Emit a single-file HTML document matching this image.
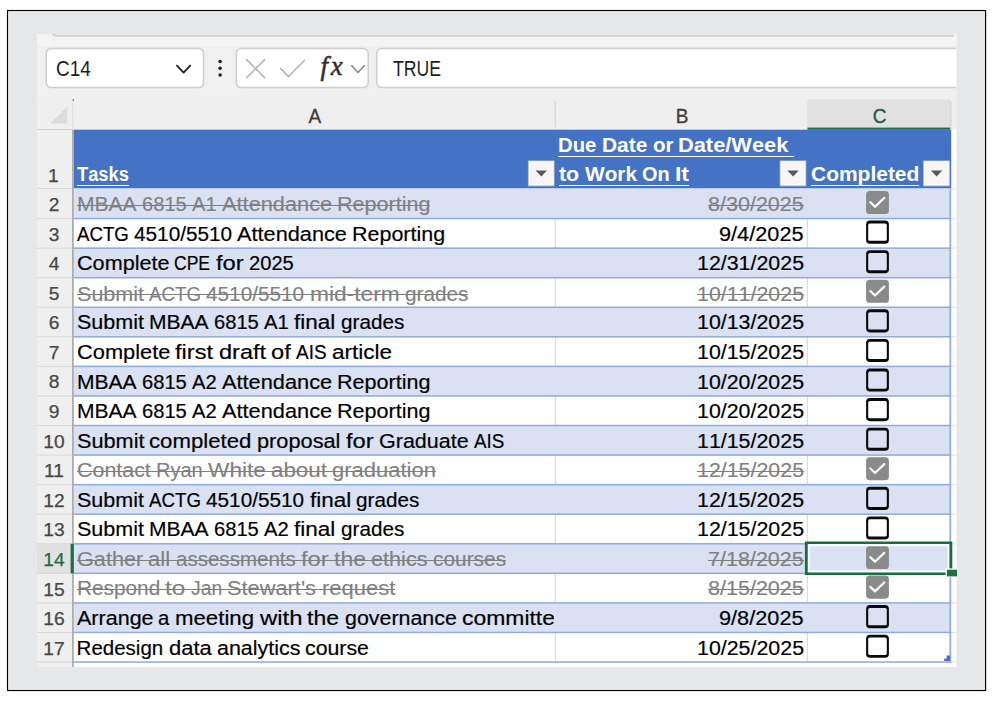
<!DOCTYPE html>
<html lang="en">
<head>
<meta charset="utf-8">
<title>Task list</title>
<style>
html,body{margin:0;padding:0;background:#fff;}
body{width:997px;height:715px;position:relative;overflow:hidden;font-family:"Liberation Sans",Arial,sans-serif;}
.abs{position:absolute;}
svg.bg{position:absolute;left:0;top:0;display:block;}
.clip{left:0;top:0;width:997px;height:715px;clip-path:inset(34px 40px 48px 37px);}
.ln{position:absolute;white-space:pre;line-height:1;height:1em;font-kerning:none;font-variant-ligatures:none;}
.w{display:inline-block;transform-origin:0 50%;white-space:pre;word-spacing:0;}
.cell{font-size:20.5px;color:#000;-webkit-text-stroke:0.18px currentColor;}
.done{color:#808080;-webkit-text-stroke:0.1px currentColor;background:linear-gradient(#7f7f7f,#7f7f7f) 0 10.6px/100% 1.4px no-repeat;}
.hd{font-size:20.3px;font-weight:bold;color:#fff;background:linear-gradient(#fff,#fff) 0 21.2px/100% 1.4px no-repeat;height:23px;}
.rn{position:absolute;font-size:19.2px;color:#474747;line-height:1;text-align:center;width:36px;left:36px;white-space:nowrap;transform:scaleX(1.0);-webkit-text-stroke:0.25px currentColor;}
.cl{position:absolute;font-size:20.2px;transform:scaleX(0.94);-webkit-text-stroke:0.3px currentColor;color:#3c3c3c;line-height:1;text-align:center;white-space:nowrap;}
.ui{position:absolute;font-size:22.6px;color:#1e1e1e;line-height:1;white-space:nowrap;transform-origin:0 50%;}
.fx{position:absolute;font-family:"Liberation Serif","DejaVu Serif",serif;font-style:italic;font-weight:normal;font-size:26.8px;line-height:1;color:#2e2e2e;white-space:nowrap;letter-spacing:2.8px;-webkit-text-stroke:0.5px currentColor;}
</style>
</head>
<body>
<svg class="bg" width="997" height="715" viewBox="0 0 997 715" >
<defs><clipPath id="shot"><rect x="37" y="34" width="920" height="633"/></clipPath></defs>
<rect x="7.60" y="10.60" width="977.90" height="679.85" fill="#e6e7e8" stroke="#000" stroke-width="1.3"/>
<rect x="8.75" y="11.75" width="975.60" height="677.55" fill="none" stroke="#f0f1f3" stroke-width="0.9"/>
<g clip-path="url(#shot)">
<rect x="37.00" y="34.00" width="920.00" height="633.00" fill="#f0f0f0"/>
<rect x="37.00" y="34.00" width="920.00" height="14.00" fill="#f4f4f4"/>
<path d="M52.5 34 Q54 35.8 57.5 35.8 L954 35.8" fill="none" stroke="#d2d2d2" stroke-width="2"/>
<rect x="37.00" y="46.60" width="920.00" height="1.20" fill="#ececec"/>
<rect x="46.3" y="48.4" width="157.2" height="39.2" rx="5" fill="#fff" stroke="#cfcfcf" stroke-width="1.5"/>
<path d="M177 65.6 L183.6 72.6 L190.2 65.6" fill="none" stroke="#262626" stroke-width="1.9" stroke-linecap="round" stroke-linejoin="round"/>
<circle cx="220.1" cy="61.5" r="1.75" fill="#1c1c1c"/>
<circle cx="220.1" cy="68.3" r="1.75" fill="#1c1c1c"/>
<circle cx="220.1" cy="75.1" r="1.75" fill="#1c1c1c"/>
<rect x="236.4" y="48.4" width="131.8" height="39.2" rx="5" fill="#fff" stroke="#cfcfcf" stroke-width="1.5"/>
<path d="M246.6 59.6 L264.6 77.6 M264.6 59.6 L246.6 77.6" fill="none" stroke="#b2b2b2" stroke-width="1.5" stroke-linecap="round"/>
<path d="M280.6 68.6 L288.6 76.6 L304.6 60.2" fill="none" stroke="#b2b2b2" stroke-width="1.5" stroke-linecap="round" stroke-linejoin="round"/>
<path d="M351.6 65.6 L358 72.4 L364.4 65.6" fill="none" stroke="#868686" stroke-width="1.5" stroke-linecap="round" stroke-linejoin="round"/>
<rect x="376.8" y="48.4" width="620" height="39.2" rx="5" fill="#fff" stroke="#cfcfcf" stroke-width="1.5"/>
<rect x="37.00" y="98.00" width="920.00" height="31.90" fill="#efefef"/>
<path d="M67.4 106.4 L67.4 123.4 L50.4 123.4 Z" fill="#dcdcdc"/>
<rect x="807.30" y="99.50" width="143.30" height="30.40" fill="#e1e1e1"/>
<rect x="807.30" y="127.60" width="143.30" height="2.30" fill="#1f7145"/>
<rect x="554.70" y="101.50" width="1.10" height="28.40" fill="#d0d0d0"/>
<rect x="950.30" y="101.50" width="1.10" height="28.40" fill="#d0d0d0"/>
<rect x="72.10" y="101.50" width="1.10" height="27.40" fill="#e0e0e0"/>
<circle cx="73.3" cy="99.9" r="0.9" fill="#7a7a7a"/>
<rect x="37.00" y="128.90" width="770.30" height="1.00" fill="#c9c9c9"/>
<rect x="37.00" y="127.60" width="770.30" height="0.90" fill="#f6f6f6"/>
<rect x="37.00" y="129.90" width="36.50" height="537.10" fill="#efefef"/>
<rect x="73.50" y="129.90" width="883.50" height="537.10" fill="#fff"/>
<rect x="73.50" y="129.90" width="877.70" height="58.60" fill="#4472c4"/>
<rect x="37.00" y="543.78" width="36.50" height="29.57" fill="#e1e1e1"/>
<rect x="73.50" y="188.50" width="877.10" height="30.06" fill="#d9e1f2"/>
<rect x="554.80" y="218.56" width="1.10" height="29.57" fill="#d9d9d9"/>
<rect x="806.80" y="218.56" width="1.10" height="29.57" fill="#d9d9d9"/>
<rect x="73.50" y="248.13" width="877.10" height="29.57" fill="#d9e1f2"/>
<rect x="554.80" y="277.69" width="1.10" height="29.57" fill="#d9d9d9"/>
<rect x="806.80" y="277.69" width="1.10" height="29.57" fill="#d9d9d9"/>
<rect x="73.50" y="307.26" width="877.10" height="29.57" fill="#d9e1f2"/>
<rect x="554.80" y="336.83" width="1.10" height="29.57" fill="#d9d9d9"/>
<rect x="806.80" y="336.83" width="1.10" height="29.57" fill="#d9d9d9"/>
<rect x="73.50" y="366.39" width="877.10" height="29.57" fill="#d9e1f2"/>
<rect x="554.80" y="395.96" width="1.10" height="29.57" fill="#d9d9d9"/>
<rect x="806.80" y="395.96" width="1.10" height="29.57" fill="#d9d9d9"/>
<rect x="73.50" y="425.52" width="877.10" height="29.57" fill="#d9e1f2"/>
<rect x="554.80" y="455.09" width="1.10" height="29.57" fill="#d9d9d9"/>
<rect x="806.80" y="455.09" width="1.10" height="29.57" fill="#d9d9d9"/>
<rect x="73.50" y="484.65" width="877.10" height="29.57" fill="#d9e1f2"/>
<rect x="554.80" y="514.22" width="1.10" height="29.57" fill="#d9d9d9"/>
<rect x="806.80" y="514.22" width="1.10" height="29.57" fill="#d9d9d9"/>
<rect x="73.50" y="543.78" width="877.10" height="29.57" fill="#d9e1f2"/>
<rect x="554.80" y="573.35" width="1.10" height="29.57" fill="#d9d9d9"/>
<rect x="806.80" y="573.35" width="1.10" height="29.57" fill="#d9d9d9"/>
<rect x="73.50" y="602.91" width="877.10" height="29.57" fill="#d9e1f2"/>
<rect x="554.80" y="632.48" width="1.10" height="29.57" fill="#d9d9d9"/>
<rect x="806.80" y="632.48" width="1.10" height="29.57" fill="#d9d9d9"/>
<rect x="37.00" y="188.00" width="34.90" height="1.00" fill="#d9d9d9"/>
<rect x="951.40" y="188.00" width="5.60" height="1.00" fill="#e2e2e2"/>
<rect x="37.00" y="218.06" width="34.90" height="1.00" fill="#d9d9d9"/>
<rect x="951.40" y="218.06" width="5.60" height="1.00" fill="#e2e2e2"/>
<rect x="73.50" y="217.81" width="877.70" height="1.50" fill="#8faadc"/>
<rect x="37.00" y="247.63" width="34.90" height="1.00" fill="#d9d9d9"/>
<rect x="951.40" y="247.63" width="5.60" height="1.00" fill="#e2e2e2"/>
<rect x="73.50" y="247.38" width="877.70" height="1.50" fill="#8faadc"/>
<rect x="37.00" y="277.19" width="34.90" height="1.00" fill="#d9d9d9"/>
<rect x="951.40" y="277.19" width="5.60" height="1.00" fill="#e2e2e2"/>
<rect x="73.50" y="276.94" width="877.70" height="1.50" fill="#8faadc"/>
<rect x="37.00" y="306.76" width="34.90" height="1.00" fill="#d9d9d9"/>
<rect x="951.40" y="306.76" width="5.60" height="1.00" fill="#e2e2e2"/>
<rect x="73.50" y="306.51" width="877.70" height="1.50" fill="#8faadc"/>
<rect x="37.00" y="336.33" width="34.90" height="1.00" fill="#d9d9d9"/>
<rect x="951.40" y="336.33" width="5.60" height="1.00" fill="#e2e2e2"/>
<rect x="73.50" y="336.08" width="877.70" height="1.50" fill="#8faadc"/>
<rect x="37.00" y="365.89" width="34.90" height="1.00" fill="#d9d9d9"/>
<rect x="951.40" y="365.89" width="5.60" height="1.00" fill="#e2e2e2"/>
<rect x="73.50" y="365.64" width="877.70" height="1.50" fill="#8faadc"/>
<rect x="37.00" y="395.46" width="34.90" height="1.00" fill="#d9d9d9"/>
<rect x="951.40" y="395.46" width="5.60" height="1.00" fill="#e2e2e2"/>
<rect x="73.50" y="395.21" width="877.70" height="1.50" fill="#8faadc"/>
<rect x="37.00" y="425.02" width="34.90" height="1.00" fill="#d9d9d9"/>
<rect x="951.40" y="425.02" width="5.60" height="1.00" fill="#e2e2e2"/>
<rect x="73.50" y="424.77" width="877.70" height="1.50" fill="#8faadc"/>
<rect x="37.00" y="454.59" width="34.90" height="1.00" fill="#d9d9d9"/>
<rect x="951.40" y="454.59" width="5.60" height="1.00" fill="#e2e2e2"/>
<rect x="73.50" y="454.34" width="877.70" height="1.50" fill="#8faadc"/>
<rect x="37.00" y="484.15" width="34.90" height="1.00" fill="#d9d9d9"/>
<rect x="951.40" y="484.15" width="5.60" height="1.00" fill="#e2e2e2"/>
<rect x="73.50" y="483.90" width="877.70" height="1.50" fill="#8faadc"/>
<rect x="37.00" y="513.72" width="34.90" height="1.00" fill="#d9d9d9"/>
<rect x="951.40" y="513.72" width="5.60" height="1.00" fill="#e2e2e2"/>
<rect x="73.50" y="513.47" width="877.70" height="1.50" fill="#8faadc"/>
<rect x="37.00" y="543.28" width="34.90" height="1.00" fill="#d9d9d9"/>
<rect x="951.40" y="543.28" width="5.60" height="1.00" fill="#e2e2e2"/>
<rect x="73.50" y="543.03" width="877.70" height="1.50" fill="#8faadc"/>
<rect x="37.00" y="572.85" width="34.90" height="1.00" fill="#d9d9d9"/>
<rect x="951.40" y="572.85" width="5.60" height="1.00" fill="#e2e2e2"/>
<rect x="73.50" y="572.60" width="877.70" height="1.50" fill="#8faadc"/>
<rect x="37.00" y="602.41" width="34.90" height="1.00" fill="#d9d9d9"/>
<rect x="951.40" y="602.41" width="5.60" height="1.00" fill="#e2e2e2"/>
<rect x="73.50" y="602.16" width="877.70" height="1.50" fill="#8faadc"/>
<rect x="37.00" y="631.98" width="34.90" height="1.00" fill="#d9d9d9"/>
<rect x="951.40" y="631.98" width="5.60" height="1.00" fill="#e2e2e2"/>
<rect x="73.50" y="631.73" width="877.70" height="1.50" fill="#8faadc"/>
<rect x="37.00" y="661.54" width="34.90" height="1.00" fill="#d9d9d9"/>
<rect x="951.40" y="661.54" width="5.60" height="1.00" fill="#e2e2e2"/>
<rect x="73.50" y="661.29" width="877.70" height="1.50" fill="#8faadc"/>
<rect x="949.50" y="188.50" width="1.70" height="473.54" fill="#8faadc"/>
<rect x="72.00" y="129.90" width="1.80" height="537.10" fill="#adadad"/>
<rect x="70.60" y="543.78" width="3.20" height="29.57" fill="#1f7145"/>
<rect x="956.20" y="34.00" width="0.80" height="633.00" fill="#f1f1f1"/>
<rect x="528.4" y="161" width="25.6" height="24.8" fill="#f6f6f6" stroke="#c6c6c6" stroke-width="1"/>
<rect x="529.5" y="162.1" width="23.4" height="22.6" fill="none" stroke="#fff" stroke-width="1"/>
<path d="M535.6 170.6 L547.0 170.6 L541.3 176.4 Z" fill="#595959"/>
<rect x="780.2" y="161" width="25.6" height="24.8" fill="#f6f6f6" stroke="#c6c6c6" stroke-width="1"/>
<rect x="781.3" y="162.1" width="23.4" height="22.6" fill="none" stroke="#fff" stroke-width="1"/>
<path d="M787.4 170.6 L798.8 170.6 L793.1 176.4 Z" fill="#595959"/>
<rect x="923.7" y="161" width="25.6" height="24.8" fill="#f6f6f6" stroke="#c6c6c6" stroke-width="1"/>
<rect x="924.8" y="162.1" width="23.4" height="22.6" fill="none" stroke="#fff" stroke-width="1"/>
<path d="M930.9 170.6 L942.3 170.6 L936.6 176.4 Z" fill="#595959"/>
<rect x="866.10" y="191.00" width="22.80" height="23.10" rx="3.6" fill="#8a8a8a"/>
<path d="M870.40 202.30 L875.00 206.80 L884.30 197.90" fill="none" stroke="#fff" stroke-width="2.2" stroke-linecap="round" stroke-linejoin="round"/>
<rect x="866.10" y="220.58" width="22.80" height="23.10" rx="3.8" fill="#0a0a0a"/>
<rect x="868.20" y="223.48" width="18.60" height="17.30" rx="1.6" fill="#fff"/>
<rect x="866.10" y="250.16" width="22.80" height="23.10" rx="3.8" fill="#0a0a0a"/>
<rect x="868.20" y="253.06" width="18.60" height="17.30" rx="1.6" fill="#d9e1f2"/>
<rect x="866.10" y="279.74" width="22.80" height="23.10" rx="3.6" fill="#8a8a8a"/>
<path d="M870.40 291.04 L875.00 295.54 L884.30 286.64" fill="none" stroke="#fff" stroke-width="2.2" stroke-linecap="round" stroke-linejoin="round"/>
<rect x="866.10" y="309.32" width="22.80" height="23.10" rx="3.8" fill="#0a0a0a"/>
<rect x="868.20" y="312.22" width="18.60" height="17.30" rx="1.6" fill="#d9e1f2"/>
<rect x="866.10" y="338.90" width="22.80" height="23.10" rx="3.8" fill="#0a0a0a"/>
<rect x="868.20" y="341.80" width="18.60" height="17.30" rx="1.6" fill="#fff"/>
<rect x="866.10" y="368.48" width="22.80" height="23.10" rx="3.8" fill="#0a0a0a"/>
<rect x="868.20" y="371.38" width="18.60" height="17.30" rx="1.6" fill="#d9e1f2"/>
<rect x="866.10" y="398.06" width="22.80" height="23.10" rx="3.8" fill="#0a0a0a"/>
<rect x="868.20" y="400.96" width="18.60" height="17.30" rx="1.6" fill="#fff"/>
<rect x="866.10" y="427.64" width="22.80" height="23.10" rx="3.8" fill="#0a0a0a"/>
<rect x="868.20" y="430.54" width="18.60" height="17.30" rx="1.6" fill="#d9e1f2"/>
<rect x="866.10" y="457.22" width="22.80" height="23.10" rx="3.6" fill="#8a8a8a"/>
<path d="M870.40 468.52 L875.00 473.02 L884.30 464.12" fill="none" stroke="#fff" stroke-width="2.2" stroke-linecap="round" stroke-linejoin="round"/>
<rect x="866.10" y="486.80" width="22.80" height="23.10" rx="3.8" fill="#0a0a0a"/>
<rect x="868.20" y="489.70" width="18.60" height="17.30" rx="1.6" fill="#d9e1f2"/>
<rect x="866.10" y="516.38" width="22.80" height="23.10" rx="3.8" fill="#0a0a0a"/>
<rect x="868.20" y="519.28" width="18.60" height="17.30" rx="1.6" fill="#fff"/>
<rect x="866.10" y="545.96" width="22.80" height="23.10" rx="3.6" fill="#8a8a8a"/>
<path d="M870.40 557.26 L875.00 561.76 L884.30 552.86" fill="none" stroke="#fff" stroke-width="2.2" stroke-linecap="round" stroke-linejoin="round"/>
<rect x="866.10" y="575.54" width="22.80" height="23.10" rx="3.6" fill="#8a8a8a"/>
<path d="M870.40 586.84 L875.00 591.34 L884.30 582.44" fill="none" stroke="#fff" stroke-width="2.2" stroke-linecap="round" stroke-linejoin="round"/>
<rect x="866.10" y="605.12" width="22.80" height="23.10" rx="3.8" fill="#0a0a0a"/>
<rect x="868.20" y="608.02" width="18.60" height="17.30" rx="1.6" fill="#d9e1f2"/>
<rect x="866.10" y="634.70" width="22.80" height="23.10" rx="3.8" fill="#0a0a0a"/>
<rect x="868.20" y="637.60" width="18.60" height="17.30" rx="1.6" fill="#fff"/>
<path fill-rule="evenodd" fill="#fff" d="M807.60 544.00 H949.60 V572.80 H807.60 Z M809.60 546.20 H947.60 V570.60 H809.60 Z"/>
<path fill-rule="evenodd" fill="#176d3e" d="M804.90 541.60 H952.30 V575.10 H804.90 Z M807.70 544.10 H949.50 V572.60 H807.70 Z"/>
<rect x="945.60" y="568.40" width="11.40" height="8.90" fill="#fff"/>
<rect x="946.90" y="569.70" width="10.10" height="6.70" fill="#1f7145"/>
<path d="M944.2 661 L944.2 658.6 L946.6 658.6 L946.6 655.6 L950 655.6 L950 661 Z" fill="#4a6ec2"/>
</g>
</svg>
<div class="abs clip">
<div class="ui" style="left:55.8px;top:58px;transform:scaleX(0.8400);">C14</div>
<div class="fx" style="left:320.4px;top:53.2px;">fx</div>
<div class="ui" style="left:392.6px;top:58px;transform:scaleX(0.7800);">TRUE</div>
<div class="cl" style="left:74.3px;width:481.8px;top:105.9px;color:#3c3c3c;">A</div>
<div class="cl" style="left:556.1px;width:252.0px;top:105.9px;color:#3c3c3c;">B</div>
<div class="cl" style="left:808.1px;width:143.3px;top:105.9px;color:#1d5a3c;">C</div>
<div class="rn" style="top:165.5px;margin-left:-0.6px;">1</div>
<div class="rn" style="top:195.00px;color:#474747;">2</div>
<div class="ln cell done" style="left:76.60px;top:193.95px;width:353.90px;word-spacing:-0.42px;"><span class="w" style="transform:scaleX(1.0269);margin-right:1.57px">MBAA</span> <span class="w" style="transform:scaleX(0.9825);margin-right:-0.80px">6815</span> <span class="w" style="transform:scaleX(0.9853);margin-right:-0.37px">A1</span> <span class="w" style="transform:scaleX(1.0625);margin-right:6.49px">Attendance</span> <span class="w" style="transform:scaleX(1.0510);margin-right:4.53px">Reporting</span></div>
<div class="ln cell done" style="left:707.82px;top:193.95px;width:95.79px;"><span class="w" style="transform:scaleX(1.0503)">8/30/2025</span></div>
<div class="rn" style="top:224.58px;color:#474747;">3</div>
<div class="ln cell" style="left:76.60px;top:223.53px;width:368.90px;word-spacing:-0.43px;"><span class="w" style="transform:scaleX(0.9115);margin-right:-5.04px">ACTG</span> <span class="w" style="transform:scaleX(1.0128);margin-right:1.24px">4510/5510</span> <span class="w" style="transform:scaleX(1.0596);margin-right:6.18px">Attendance</span> <span class="w" style="transform:scaleX(1.0481);margin-right:4.28px">Reporting</span></div>
<div class="ln cell" style="left:719.06px;top:223.53px;width:84.55px;"><span class="w" style="transform:scaleX(1.0596)">9/4/2025</span></div>
<div class="rn" style="top:254.16px;color:#474747;">4</div>
<div class="ln cell" style="left:76.60px;top:253.11px;width:216.96px;word-spacing:-0.39px;"><span class="w" style="transform:scaleX(1.0542);margin-right:4.75px">Complete</span> <span class="w" style="transform:scaleX(0.8556);margin-right:-6.09px">CPE</span> <span class="w" style="transform:scaleX(1.1577);margin-right:3.77px">for</span> <span class="w" style="transform:scaleX(0.9825);margin-right:-0.80px">2025</span></div>
<div class="ln cell" style="left:696.58px;top:253.11px;width:107.03px;"><span class="w" style="transform:scaleX(1.0431)">12/31/2025</span></div>
<div class="rn" style="top:283.74px;color:#474747;">5</div>
<div class="ln cell done" style="left:76.60px;top:283.69px;width:391.37px;word-spacing:-0.42px;"><span class="w" style="transform:scaleX(1.0515);margin-right:3.28px">Submit</span> <span class="w" style="transform:scaleX(0.9142);margin-right:-4.88px">ACTG</span> <span class="w" style="transform:scaleX(1.0128);margin-right:1.24px">4510/5510</span> <span class="w" style="transform:scaleX(1.1087);margin-right:8.79px">mid-term</span> <span class="w" style="transform:scaleX(1.0103);margin-right:0.64px">grades</span></div>
<div class="ln cell done" style="left:696.58px;top:283.69px;width:107.03px;"><span class="w" style="transform:scaleX(1.0431)">10/11/2025</span></div>
<div class="rn" style="top:313.32px;color:#474747;">6</div>
<div class="ln cell" style="left:76.60px;top:312.27px;width:327.17px;word-spacing:-0.42px;"><span class="w" style="transform:scaleX(1.0511);margin-right:3.26px">Submit</span> <span class="w" style="transform:scaleX(1.0268);margin-right:1.56px">MBAA</span> <span class="w" style="transform:scaleX(0.9825);margin-right:-0.80px">6815</span> <span class="w" style="transform:scaleX(0.9852);margin-right:-0.37px">A1</span> <span class="w" style="transform:scaleX(1.0975);margin-right:3.67px">final</span> <span class="w" style="transform:scaleX(1.0099);margin-right:0.62px">grades</span></div>
<div class="ln cell" style="left:696.58px;top:312.27px;width:107.03px;"><span class="w" style="transform:scaleX(1.0431)">10/13/2025</span></div>
<div class="rn" style="top:342.90px;color:#474747;">7</div>
<div class="ln cell" style="left:76.60px;top:341.85px;width:315.73px;word-spacing:-0.35px;"><span class="w" style="transform:scaleX(1.0639);margin-right:5.61px">Complete</span> <span class="w" style="transform:scaleX(1.1533);margin-right:5.06px">first</span> <span class="w" style="transform:scaleX(1.1499);margin-right:6.15px">draft</span> <span class="w" style="transform:scaleX(1.1524);margin-right:2.60px">of</span> <span class="w" style="transform:scaleX(0.9239);margin-right:-2.51px">AIS</span> <span class="w" style="transform:scaleX(1.1001);margin-right:5.47px">article</span></div>
<div class="ln cell" style="left:696.58px;top:341.85px;width:107.03px;"><span class="w" style="transform:scaleX(1.0431)">10/15/2025</span></div>
<div class="rn" style="top:372.48px;color:#474747;">8</div>
<div class="ln cell" style="left:76.60px;top:372.43px;width:353.80px;word-spacing:-0.42px;"><span class="w" style="transform:scaleX(1.0266);margin-right:1.55px">MBAA</span> <span class="w" style="transform:scaleX(0.9825);margin-right:-0.80px">6815</span> <span class="w" style="transform:scaleX(0.9851);margin-right:-0.37px">A2</span> <span class="w" style="transform:scaleX(1.0622);margin-right:6.45px">Attendance</span> <span class="w" style="transform:scaleX(1.0506);margin-right:4.50px">Reporting</span></div>
<div class="ln cell" style="left:696.58px;top:372.43px;width:107.03px;"><span class="w" style="transform:scaleX(1.0431)">10/20/2025</span></div>
<div class="rn" style="top:402.06px;color:#474747;">9</div>
<div class="ln cell" style="left:76.60px;top:401.01px;width:353.80px;word-spacing:-0.42px;"><span class="w" style="transform:scaleX(1.0266);margin-right:1.55px">MBAA</span> <span class="w" style="transform:scaleX(0.9825);margin-right:-0.80px">6815</span> <span class="w" style="transform:scaleX(0.9851);margin-right:-0.37px">A2</span> <span class="w" style="transform:scaleX(1.0622);margin-right:6.45px">Attendance</span> <span class="w" style="transform:scaleX(1.0506);margin-right:4.50px">Reporting</span></div>
<div class="ln cell" style="left:696.58px;top:401.01px;width:107.03px;"><span class="w" style="transform:scaleX(1.0431)">10/20/2025</span></div>
<div class="rn" style="top:431.64px;color:#474747;">10</div>
<div class="ln cell" style="left:76.60px;top:430.59px;width:427.51px;word-spacing:-0.39px;"><span class="w" style="transform:scaleX(1.0574);margin-right:3.66px">Submit</span> <span class="w" style="transform:scaleX(1.0821);margin-right:7.77px">completed</span> <span class="w" style="transform:scaleX(1.0610);margin-right:4.80px">proposal</span> <span class="w" style="transform:scaleX(1.1592);margin-right:3.81px">for</span> <span class="w" style="transform:scaleX(1.0495);margin-right:4.23px">Graduate</span> <span class="w" style="transform:scaleX(0.9166);margin-right:-2.75px">AIS</span></div>
<div class="ln cell" style="left:696.58px;top:430.59px;width:107.03px;"><span class="w" style="transform:scaleX(1.0431)">11/15/2025</span></div>
<div class="rn" style="top:461.22px;color:#474747;">11</div>
<div class="ln cell done" style="left:76.60px;top:460.17px;width:359.40px;word-spacing:-0.41px;"><span class="w" style="transform:scaleX(1.0447);margin-right:3.16px">Contact</span> <span class="w" style="transform:scaleX(0.9768);margin-right:-1.11px">Ryan</span> <span class="w" style="transform:scaleX(1.1049);margin-right:5.50px">White</span> <span class="w" style="transform:scaleX(1.0899);margin-right:4.61px">about</span> <span class="w" style="transform:scaleX(1.0724);margin-right:7.02px">graduation</span></div>
<div class="ln cell done" style="left:696.58px;top:460.17px;width:107.03px;"><span class="w" style="transform:scaleX(1.0431)">12/15/2025</span></div>
<div class="rn" style="top:490.80px;color:#474747;">12</div>
<div class="ln cell" style="left:76.60px;top:489.75px;width:342.67px;word-spacing:-0.42px;"><span class="w" style="transform:scaleX(1.0500);margin-right:3.19px">Submit</span> <span class="w" style="transform:scaleX(0.9130);margin-right:-4.96px">ACTG</span> <span class="w" style="transform:scaleX(1.0128);margin-right:1.24px">4510/5510</span> <span class="w" style="transform:scaleX(1.0964);margin-right:3.62px">final</span> <span class="w" style="transform:scaleX(1.0088);margin-right:0.55px">grades</span></div>
<div class="ln cell" style="left:696.58px;top:489.75px;width:107.03px;"><span class="w" style="transform:scaleX(1.0431)">12/15/2025</span></div>
<div class="rn" style="top:520.38px;color:#474747;">13</div>
<div class="ln cell" style="left:76.60px;top:519.33px;width:327.17px;word-spacing:-0.42px;"><span class="w" style="transform:scaleX(1.0511);margin-right:3.26px">Submit</span> <span class="w" style="transform:scaleX(1.0268);margin-right:1.56px">MBAA</span> <span class="w" style="transform:scaleX(0.9825);margin-right:-0.80px">6815</span> <span class="w" style="transform:scaleX(0.9852);margin-right:-0.37px">A2</span> <span class="w" style="transform:scaleX(1.0975);margin-right:3.67px">final</span> <span class="w" style="transform:scaleX(1.0099);margin-right:0.62px">grades</span></div>
<div class="ln cell" style="left:696.58px;top:519.33px;width:107.03px;"><span class="w" style="transform:scaleX(1.0431)">12/15/2025</span></div>
<div class="rn" style="top:549.96px;color:#1e6a44;">14</div>
<div class="ln cell done" style="left:76.60px;top:548.91px;width:429.47px;word-spacing:-0.37px;"><span class="w" style="transform:scaleX(1.0579);margin-right:3.63px">Gather</span> <span class="w" style="transform:scaleX(1.0766);margin-right:1.57px">all</span> <span class="w" style="transform:scaleX(1.0014);margin-right:0.17px">assessments</span> <span class="w" style="transform:scaleX(1.1622);margin-right:3.88px">for</span> <span class="w" style="transform:scaleX(1.1217);margin-right:3.47px">the</span> <span class="w" style="transform:scaleX(1.0556);margin-right:2.98px">ethics</span> <span class="w" style="transform:scaleX(1.0180);margin-right:1.29px">courses</span></div>
<div class="ln cell done" style="left:707.82px;top:548.91px;width:95.79px;"><span class="w" style="transform:scaleX(1.0503)">7/18/2025</span></div>
<div class="rn" style="top:579.54px;color:#474747;">15</div>
<div class="ln cell done" style="left:76.60px;top:578.49px;width:318.30px;word-spacing:-0.38px;"><span class="w" style="transform:scaleX(1.0137);margin-right:1.13px">Respond</span> <span class="w" style="transform:scaleX(1.1868);margin-right:3.19px">to</span> <span class="w" style="transform:scaleX(0.9421);margin-right:-1.91px">Jan</span> <span class="w" style="transform:scaleX(1.0635);margin-right:5.32px">Stewart's</span> <span class="w" style="transform:scaleX(1.0739);margin-right:5.06px">request</span></div>
<div class="ln cell done" style="left:707.82px;top:578.49px;width:95.79px;"><span class="w" style="transform:scaleX(1.0503)">8/15/2025</span></div>
<div class="rn" style="top:609.12px;color:#474747;">16</div>
<div class="abs" style="left:73.5px;top:602.62px;width:480.9px;height:29.58px;overflow:hidden;"><div class="ln cell" style="left:3.10px;top:5.45px;width:478.23px;word-spacing:-0.37px;"><span class="w" style="transform:scaleX(1.0498);margin-right:3.63px">Arrange</span> <span class="w" style="transform:scaleX(0.9902);margin-right:-0.11px">a</span> <span class="w" style="transform:scaleX(1.0840);margin-right:6.13px">meeting</span> <span class="w" style="transform:scaleX(1.1667);margin-right:6.08px">with</span> <span class="w" style="transform:scaleX(1.1230);margin-right:3.50px">the</span> <span class="w" style="transform:scaleX(1.0440);margin-right:4.72px">governance</span> <span class="w" style="transform:scaleX(1.1181);margin-right:9.82px">committe</span></div></div>
<div class="ln cell" style="left:719.06px;top:608.07px;width:84.55px;"><span class="w" style="transform:scaleX(1.0596)">9/8/2025</span></div>
<div class="rn" style="top:638.70px;color:#474747;">17</div>
<div class="ln cell" style="left:76.60px;top:637.65px;width:292.63px;word-spacing:-0.37px;"><span class="w" style="transform:scaleX(1.0000);margin-right:0.00px">Redesign</span> <span class="w" style="transform:scaleX(1.0726);margin-right:2.90px">data</span> <span class="w" style="transform:scaleX(1.0458);margin-right:3.65px">analytics</span> <span class="w" style="transform:scaleX(1.0377);margin-right:2.32px">course</span></div>
<div class="ln cell" style="left:696.58px;top:637.65px;width:107.03px;"><span class="w" style="transform:scaleX(1.0431)">10/25/2025</span></div>
<div class="ln hd" style="left:76.90px;top:164.10px;width:51.98px;"><span class="w" style="transform:scaleX(0.9031)">Tasks</span></div>
<div class="ln hd" style="left:558.40px;top:134.80px;width:235.60px;word-spacing:-0.44px;"><span class="w" style="transform:scaleX(1.0023);margin-right:0.09px">Due</span> <span class="w" style="transform:scaleX(1.0324);margin-right:1.43px">Date</span> <span class="w" style="transform:scaleX(1.0123);margin-right:0.25px">or</span> <span class="w" style="transform:scaleX(1.0751);margin-right:7.71px">Date/Week</span> </div>
<div class="ln hd" style="left:559.49px;top:164.10px;width:129.45px;word-spacing:-0.48px;"><span class="w" style="transform:scaleX(1.0540);margin-right:1.04px">to</span> <span class="w" style="transform:scaleX(1.0257);margin-right:1.31px">Work</span> <span class="w" style="transform:scaleX(0.9826);margin-right:-0.49px">On</span> <span class="w" style="transform:scaleX(1.1295);margin-right:1.61px">It</span></div>
<div class="ln hd" style="left:811.01px;top:164.10px;width:108.43px;"><span class="w" style="transform:scaleX(1.0338)">Completed</span></div>
</div>
</body>
</html>
